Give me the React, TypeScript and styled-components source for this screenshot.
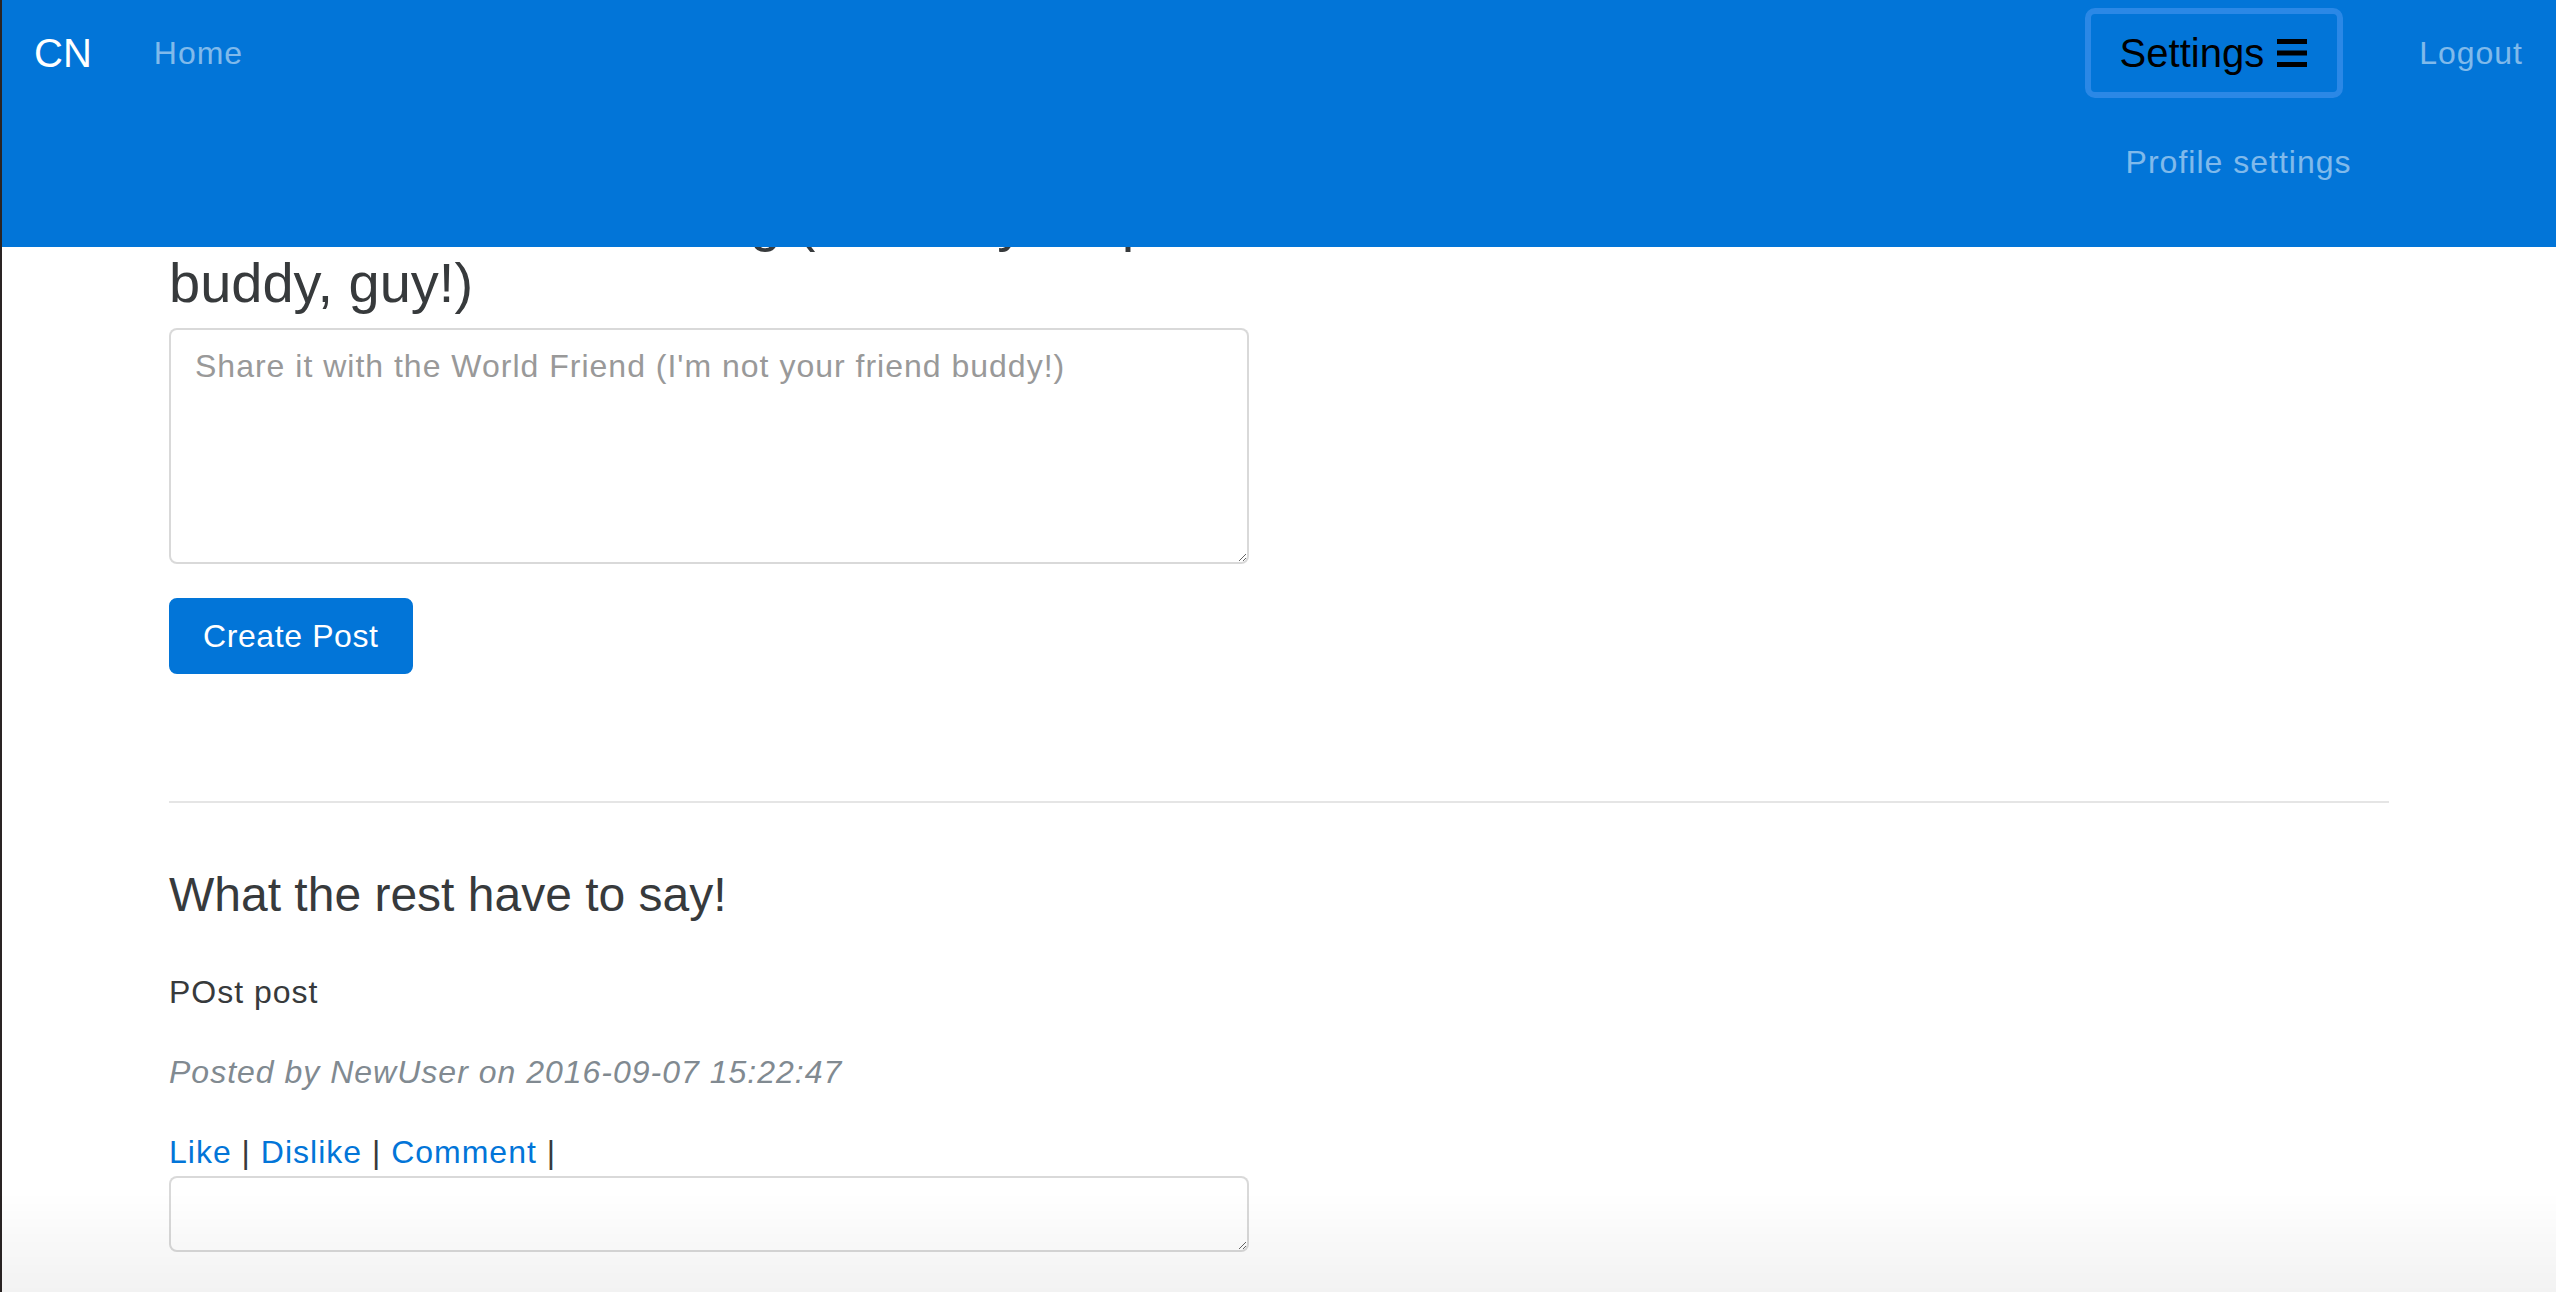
import React from "react";
import styled, { createGlobalStyle } from "styled-components";

const GlobalStyle = createGlobalStyle`
  * { box-sizing: border-box; }
  html { background: #2a2424; }
  body {
    margin: 0 0 0 2px;
    min-height: 100vh;
    background: #ffffff;
    font-family: "Liberation Sans", Arial, Helvetica, sans-serif;
    color: #373a3c;
    font-size: 32px;
    line-height: 1.5;
    letter-spacing: 1px;
  }
`;

const Navbar = styled.nav`
  position: fixed;
  top: 0;
  left: 2px;
  right: 0;
  height: 247px;
  background: #0275d8;
  padding: 8px 33px 0 32px;
  display: flex;
  justify-content: space-between;
  align-items: flex-start;
  z-index: 10;
`;

const NavGroup = styled.div<{ $gap: number }>`
  display: flex;
  align-items: flex-start;
  gap: ${(p) => p.$gap}px;
`;

const Brand = styled.a`
  height: 90px;
  display: flex;
  align-items: center;
  font-size: 40px;
  letter-spacing: 0;
  color: #ffffff;
  text-decoration: none;
`;

const NavLink = styled.a`
  height: 90px;
  display: flex;
  align-items: center;
  font-size: 32px;
  color: rgba(255, 255, 255, 0.5);
  text-decoration: none;
`;

const Dropdown = styled.div`
  position: relative;
`;

const SettingsButton = styled.button`
  height: 90px;
  display: flex;
  align-items: center;
  gap: 13px;
  padding: 0 30px 0 29px;
  border: 6px solid #2b88e6;
  border-radius: 10px;
  background: transparent;
  color: #000000;
  font-family: "Liberation Sans", Arial, Helvetica, sans-serif;
  font-size: 40px;
  letter-spacing: 0;
  cursor: pointer;
`;

const DropdownMenu = styled.div`
  position: absolute;
  top: 130px;
  left: 41px;
`;

const DropdownItem = styled.a`
  display: block;
  font-size: 32px;
  line-height: 48px;
  color: rgba(255, 255, 255, 0.5);
  text-decoration: none;
  white-space: nowrap;
`;

const Container = styled.main`
  max-width: 2280px;
  margin: 0 auto;
  padding: 190px 30px 0;
`;

const Column = styled.section`
  max-width: 1080px;
`;

const Heading = styled.h3`
  margin: 0 0 15px;
  font-size: 56px;
  line-height: 1.1;
  font-weight: 400;
  letter-spacing: 0;
`;

const TextArea = styled.textarea<{ $height: number }>`
  display: block;
  width: 100%;
  height: ${(p) => p.$height}px;
  padding: 12px 24px;
  font-family: "Liberation Sans", Arial, Helvetica, sans-serif;
  font-size: 32px;
  line-height: 1.5;
  letter-spacing: 1px;
  color: #55595c;
  border: 2px solid rgba(0, 0, 0, 0.15);
  border-radius: 8px;
  background: #ffffff;
  &::placeholder {
    color: #999999;
  }
`;

const PrimaryButton = styled.button`
  margin-top: 34px;
  padding: 12px 32px;
  font-family: "Liberation Sans", Arial, Helvetica, sans-serif;
  font-size: 32px;
  line-height: 48px;
  letter-spacing: 0.6px;
  color: #ffffff;
  background: #0275d8;
  border: 2px solid #0275d8;
  border-radius: 8px;
  cursor: pointer;
`;

const Divider = styled.hr`
  margin: 127px 0 66px;
  border: 0;
  border-top: 2px solid rgba(0, 0, 0, 0.1);
`;

const SubHeading = styled.h4`
  margin: 0 0 46px;
  font-size: 48px;
  line-height: 1.1;
  font-weight: 400;
  letter-spacing: 0;
`;

const Paragraph = styled.p<{ $muted?: boolean; $italic?: boolean; $last?: boolean }>`
  margin: 0 0 ${(p) => (p.$last ? 0 : 32)}px;
  font-size: 32px;
  line-height: 48px;
  color: ${(p) => (p.$muted ? "#818a91" : "#373a3c")};
  font-style: ${(p) => (p.$italic ? "italic" : "normal")};
`;

const ActionLink = styled.a`
  color: #0275d8;
  text-decoration: none;
`;

const BottomShade = styled.div`
  position: fixed;
  left: 0;
  right: 0;
  bottom: 0;
  height: 100px;
  background: linear-gradient(to bottom, rgba(0, 0, 0, 0), rgba(0, 0, 0, 0.05));
  pointer-events: none;
  z-index: 5;
`;

const Hamburger = () => (
  <svg width="30" height="28" viewBox="0 0 30 28" aria-hidden="true">
    <rect x="0" y="0" width="30" height="5" fill="#000" />
    <rect x="0" y="11.5" width="30" height="5" fill="#000" />
    <rect x="0" y="23" width="30" height="5" fill="#000" />
  </svg>
);

export default function App() {
  return (
    <>
      <GlobalStyle />
      <Navbar>
        <NavGroup $gap={62}>
          <Brand href="#">CN</Brand>
          <NavLink href="#">Home</NavLink>
        </NavGroup>
        <NavGroup $gap={76}>
          <Dropdown>
            <SettingsButton type="button">
              Settings <Hamburger />
            </SettingsButton>
            <DropdownMenu>
              <DropdownItem href="#">Profile settings</DropdownItem>
            </DropdownMenu>
          </Dropdown>
          <NavLink href="#">Logout</NavLink>
        </NavGroup>
      </Navbar>

      <Container>
        <Column>
          <Heading>Tell the World something (I'm not your pal, buddy, guy!)</Heading>
          <TextArea
            $height={236}
            placeholder="Share it with the World Friend (I'm not your friend buddy!)"
          />
          <PrimaryButton type="button">Create Post</PrimaryButton>
        </Column>

        <Divider />

        <Column>
          <SubHeading>What the rest have to say!</SubHeading>
          <Paragraph>POst post</Paragraph>
          <Paragraph $muted $italic>
            Posted by NewUser on 2016-09-07 15:22:47
          </Paragraph>
          <Paragraph $last>
            <ActionLink href="#">Like</ActionLink> | <ActionLink href="#">Dislike</ActionLink> |{" "}
            <ActionLink href="#">Comment</ActionLink> |
          </Paragraph>
          <TextArea $height={76} rows={1} />
        </Column>
      </Container>
      <BottomShade />
    </>
  );
}
